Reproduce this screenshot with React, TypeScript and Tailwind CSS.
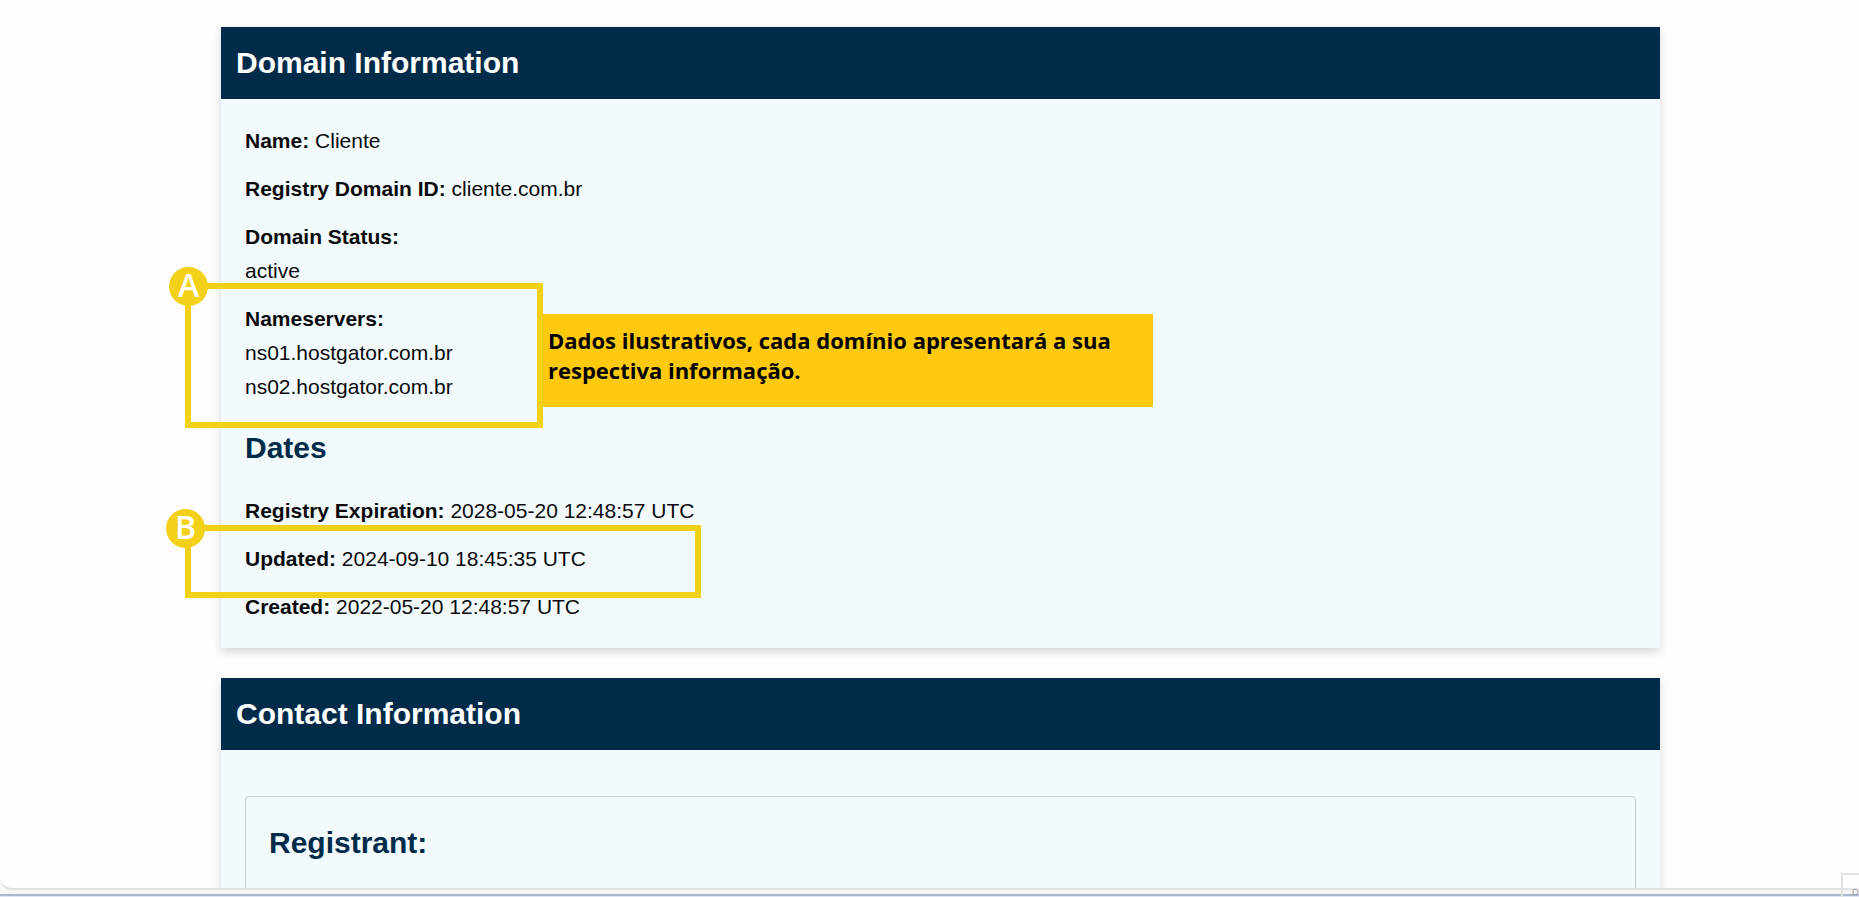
import type { ReactNode } from 'react';

function Marker({ letter, className }: { letter: string; className: string }) {
  return (
    <span
      className={`absolute flex h-[39px] w-[39px] items-center justify-center rounded-full bg-[#f2d118] pb-1 font-['Open_Sans',sans-serif] text-[32px] leading-none font-semibold text-white ${className}`}
    >
      {letter}
    </span>
  );
}

function Card({ title, children }: { title: string; children: ReactNode }) {
  return (
    <section className="bg-[#f2fafe] shadow-[0_4px_8px_rgba(0,0,0,0.15)]">
      <h2 className="bg-[#002b49] px-[15px] py-4 text-3xl leading-10 font-bold text-white">{title}</h2>
      <div className="px-6 pt-[25px] pb-6">{children}</div>
    </section>
  );
}

function Field({ label, value }: { label: string; value: string }) {
  return (
    <p>
      <strong>{label}</strong> {value}
    </p>
  );
}

export default function App() {
  return (
    <div className="flex h-screen flex-col overflow-hidden bg-[#f7f7f7] font-['Liberation_Sans',Arial,sans-serif] text-[21px] leading-[34px] text-[#0a0a0a]">
      <main className="min-h-0 flex-1 overflow-hidden rounded-bl-xl border-b-2 border-[#e2e2e2] bg-[#fdfdfd] pt-[27px] pr-[199px] pl-[221px]">
        <div className="flex flex-col gap-[30px]">
          <Card title="Domain Information">
            <div className="flex flex-col gap-[14px]">
              <Field label="Name:" value="Cliente" />
              <Field label="Registry Domain ID:" value="cliente.com.br" />
              <div>
                <strong>Domain Status:</strong>
                <p>active</p>
              </div>

              <div className="relative">
                <strong>Nameservers:</strong>
                <p>ns01.hostgator.com.br</p>
                <p>ns02.hostgator.com.br</p>

                {/* Highlight A */}
                <div className="absolute -top-[19px] -left-[60px] h-[145px] w-[358px] border-6 border-[#f2d118]">
                  <Marker letter="A" className="-top-[22px] -left-[22px]" />
                </div>
                <p className="absolute top-3 left-[298px] h-[93px] w-[610px] bg-[#ffc90e] py-[11px] pr-6 pl-[5px] font-['Open_Sans','Noto_Sans',sans-serif] text-[22px] leading-[30px] font-bold text-black">
                  Dados ilustrativos, cada domínio apresentará a sua respectiva informação.
                </p>
              </div>
            </div>

            <h3 className="mt-6 mb-[26px] text-3xl leading-10 font-bold text-[#002b49]">Dates</h3>

            <div className="flex flex-col gap-[14px]">
              <Field label="Registry Expiration:" value="2028-05-20 12:48:57 UTC" />
              <div className="relative">
                <Field label="Updated:" value="2024-09-10 18:45:35 UTC" />

                {/* Highlight B */}
                <div className="absolute -top-[17px] -left-[60px] h-[73px] w-[516px] border-6 border-[#f2d118]">
                  <Marker letter="B" className="-top-[22px] -left-[25px]" />
                </div>
              </div>
              <Field label="Created:" value="2022-05-20 12:48:57 UTC" />
            </div>
          </Card>

          <Card title="Contact Information">
            {/* Runs on past the bottom of the window */}
            <div className="mt-[21px] rounded border border-[#cccccc] px-[23px] pt-[26px] pb-24">
              <h3 className="text-3xl leading-10 font-bold text-[#002b49]">Registrant:</h3>
            </div>
          </Card>
        </div>
      </main>

      <footer className="relative h-[7px] border-b border-[#dde6f5]">
        <div className="mt-1 h-[2px] bg-[#aeb6cc]" />
        <div className="absolute right-0 -bottom-px flex h-6 w-[18px] items-end border-t-2 border-l-2 border-[#e2e2e2] pl-[9px] text-[9px] leading-[10px] text-[#a0a0a0]">
          D
        </div>
      </footer>
    </div>
  );
}
